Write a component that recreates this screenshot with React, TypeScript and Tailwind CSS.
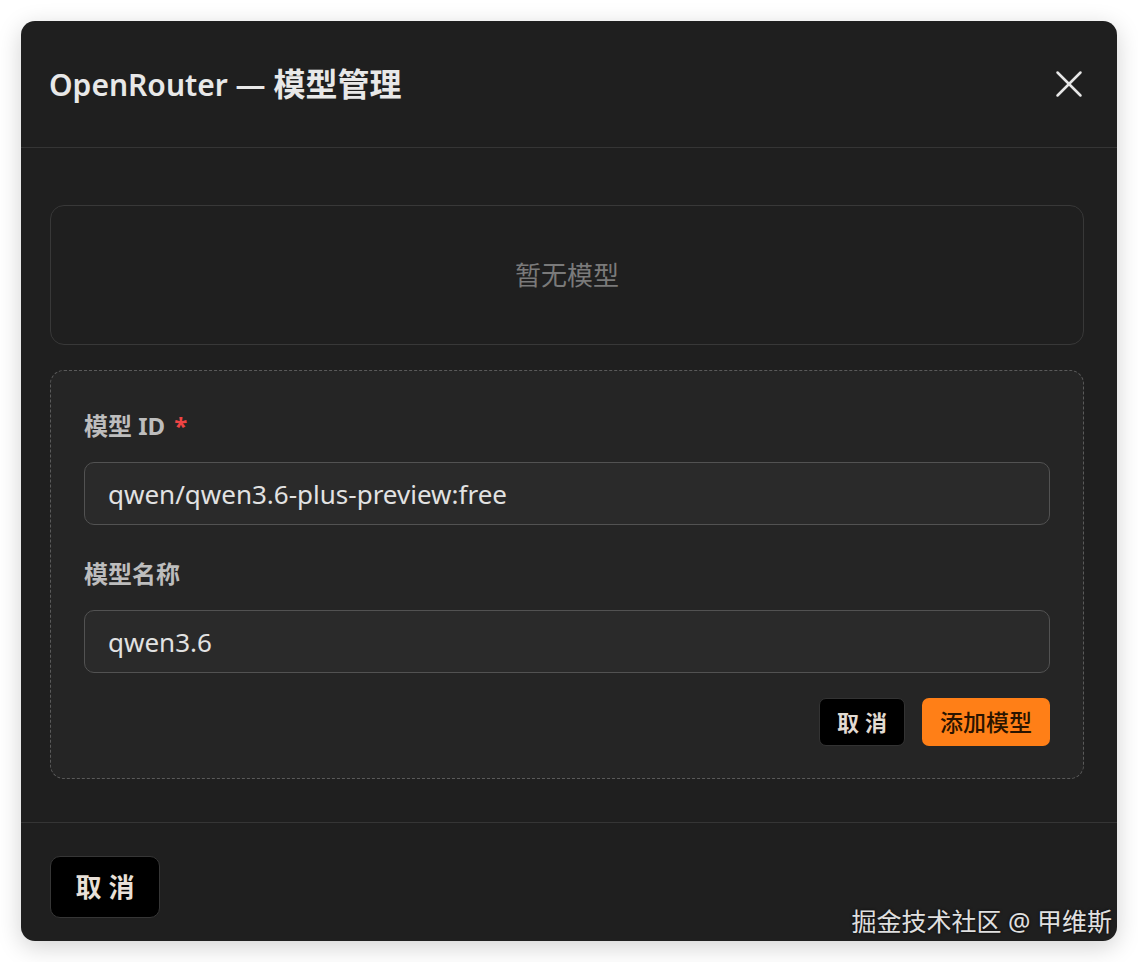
import { X } from 'lucide-react';

const font = { fontFamily: '"Noto Sans", "Noto Sans CJK SC", sans-serif' };

function Field({ label, value, required }: { label: string; value: string; required?: boolean }) {
  return (
    <div className="flex flex-col">
      <label className="text-[24px] leading-[30px] font-bold text-[#bdbdbd] mb-[21px]">
        {label}
        {required && <span className="text-[#ef4444] ml-[9px]">*</span>}
      </label>
      <div className="h-[63px] rounded-[10px] border-[1.5px] border-[#525252] bg-[#2a2a2a] px-[23px] pt-[2px] flex items-center text-[26px] text-[#e2e2e2]">
        {value}
      </div>
    </div>
  );
}

export default function App() {
  return (
    <div className="relative min-h-screen bg-white p-[21px]" style={font}>
      <div className="w-[1096px] h-[920px] rounded-[14px] bg-[#1f1f1f] shadow-[0_6px_24px_rgba(0,0,0,0.18)] flex flex-col overflow-hidden">
        {/* Header */}
        <div className="h-[127px] shrink-0 border-b border-[#353535] pl-[28px] pr-[25px] flex items-center justify-between">
          <h2 className="text-[30px] font-semibold text-[#e8e8e8]">
            OpenRouter — <span className="text-[32px]">模型管理</span>
          </h2>
          <button aria-label="close" className="text-[#e6e6e6]">
            <X size={46} strokeWidth={1.3} />
          </button>
        </div>

        {/* Body */}
        <div className="flex-1 pl-[29px] pr-[33px] pt-[57px] pb-[41px] flex flex-col gap-[25px] border-b border-[#353535]">
          <div className="h-[140px] rounded-[14px] border-[1.5px] border-[#383838] flex items-center justify-center text-[26px] text-[#7a7a7a]">
            暂无模型
          </div>

          <div className="rounded-[14px] border-[1.5px] border-dashed border-[#5a5a5a] bg-[#252525] px-[33px] pt-[40px] pb-[32px] flex flex-col">
            <Field label="模型 ID" value="qwen/qwen3.6-plus-preview:free" required />
            <div className="mt-[34px]">
              <Field label="模型名称" value="qwen3.6" />
            </div>
            <div className="mt-[25px] flex justify-end gap-[17px]">
              <button className="h-[48px] w-[86px] rounded-[7px] bg-black border border-[#333] text-[22px] font-bold text-[#e2dbd3] tracking-[6px] pl-[6px]">
                取消
              </button>
              <button className="h-[48px] w-[128px] rounded-[7px] bg-[#ff7f17] text-[23px] text-[#2a1400] font-medium">
                添加模型
              </button>
            </div>
          </div>
        </div>

        {/* Footer */}
        <div className="h-[118px] shrink-0 px-[29px] pt-[33px]">
          <button className="h-[62px] w-[110px] rounded-[10px] bg-black border border-[#363636] text-[26px] font-bold text-[#e8e0d8] tracking-[7px] pl-[7px]">
            取消
          </button>
        </div>
      </div>

      <div className="absolute right-[26px] top-[904px] text-[25px] leading-[34px] text-[#e0e0e0] [text-shadow:0_0_3px_rgba(0,0,0,0.8)]">
        掘金技术社区 @ 甲维斯
      </div>
    </div>
  );
}
